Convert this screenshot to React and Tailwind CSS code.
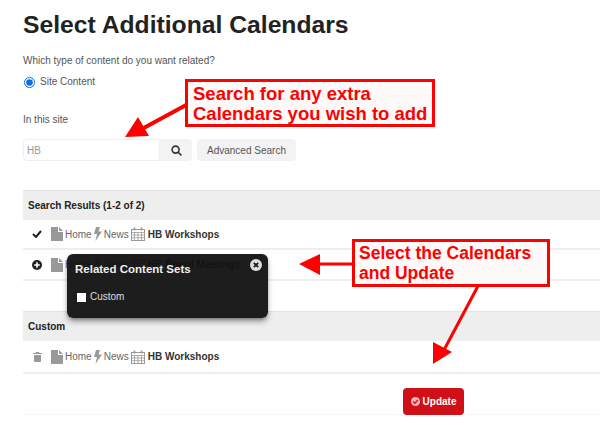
import React from 'react';

const font = { fontFamily: '"Liberation Sans", Arial, sans-serif' };

function FileIcon() {
  return (
    <svg width="12" height="14" viewBox="0 0 12 14" className="shrink-0">
      <path d="M0 0h7v5h5v9H0z" fill="#999" />
      <path d="M8 0l4 4H8z" fill="#999" />
    </svg>
  );
}

function BoltIcon() {
  return (
    <svg width="8" height="14" viewBox="0 0 8 14" className="shrink-0">
      <path d="M2 0h4L4.5 4.5H8L1.5 14l1.5-7H0z" fill="#999" />
    </svg>
  );
}

function CalendarIcon() {
  return (
    <svg width="14" height="14" viewBox="0 0 14 14" className="shrink-0" fill="none" stroke="#999" strokeWidth="1">
      <rect x="0.5" y="2.5" width="13" height="11" />
      <path d="M0.5 5.5h13M0.5 8h13M0.5 10.7h13M3.5 5.5v8M7 5.5v8M10.5 5.5v8" strokeWidth="0.8" />
      <path d="M3.5 0.5v3M10.5 0.5v3" strokeWidth="1.6" />
    </svg>
  );
}

function Crumbs({ name }) {
  return (
    <div className="flex items-center text-[10px] text-[#666]">
      <FileIcon />
      <span className="ml-[2px]">Home</span>
      <span className="ml-[2px]"><BoltIcon /></span>
      <span className="ml-[2px]">News</span>
      <span className="ml-[2px]"><CalendarIcon /></span>
      <span className="ml-[3px] font-bold text-[#333]">{name}</span>
    </div>
  );
}

function Row({ icon, name, h }) {
  return (
    <div className={`flex items-center border-b-2 border-[#eeeeee] ${h}`}>
      <div className="w-[28px] flex justify-center">{icon}</div>
      <Crumbs name={name} />
    </div>
  );
}

function SectionHead({ children, h }) {
  return (
    <div className={`flex items-center bg-[#eeeeee] border-t border-[#e2e2e2] pl-[5px] text-[10px] font-bold text-[#222] ${h}`}>
      {children}
    </div>
  );
}

function Callout({ className, children }) {
  return (
    <div className={`absolute border-[3px] border-[#ff0000] bg-[#fffafa] text-[#ff0000] font-bold ${className}`}>
      {children}
    </div>
  );
}

export default function App() {
  return (
    <div className="relative w-[600px] h-[425px] overflow-hidden bg-white pl-[23px]" style={font}>
      <h1 className="pt-[9px] text-[24.7px] leading-[32px] font-bold text-[#222]">Select Additional Calendars</h1>
      <p className="mt-[13px] text-[10px] leading-[14px] text-[#555]">Which type of content do you want related?</p>
      <label className="mt-[7px] flex items-center text-[10px] leading-[14px] text-[#555]">
        <input type="radio" defaultChecked className="ml-[1px] mt-[1px] h-[11px] w-[11px] accent-[#0b6fe8]" />
        <span className="ml-[5px]">Site Content</span>
      </label>

      <p className="mt-[24px] text-[10px] leading-[14px] text-[#555]">In this site</p>
      <div className="mt-[12px] flex">
        <div className="flex h-[22px] w-[137px] items-center rounded-l-sm border border-[#eeeeee] bg-white pl-[3px] text-[10px] text-[#999]">HB</div>
        <div className="flex h-[22px] w-[32px] items-center justify-center rounded-r-sm bg-[#f3f3f3]">
          <svg width="11" height="11" viewBox="0 0 11 11" fill="none" stroke="#333" strokeWidth="1.6">
            <circle cx="4.6" cy="4.6" r="3.5" />
            <path d="M7.2 7.2l3.2 3.2" />
          </svg>
        </div>
        <div className="ml-[5px] flex h-[22px] w-[99px] items-center justify-center rounded-sm bg-[#f3f3f3] text-[10px] text-[#555]">Advanced Search</div>
      </div>

      <div className="mt-[29px]">
        <SectionHead h="h-[30px]">Search Results (1-2 of 2)</SectionHead>
        <Row
          h="h-[30px]"
          name="HB Workshops"
          icon={
            <svg width="10" height="8" viewBox="0 0 10 8" fill="none" stroke="#222" strokeWidth="2">
              <path d="M1 4l3 3 5-6" />
            </svg>
          }
        />
        <Row
          h="h-[31px]"
          name="HB Board Meetings"
          icon={
            <svg width="10" height="10" viewBox="0 0 10 10">
              <circle cx="5" cy="5" r="5" fill="#222" />
              <path d="M5 2.2v5.6M2.2 5h5.6" stroke="#fff" strokeWidth="1.6" />
            </svg>
          }
        />
      </div>

      <div className="mt-[30px]">
        <SectionHead h="h-[30px]">Custom</SectionHead>
        <Row
          h="h-[33px]"
          name="HB Workshops"
          icon={
            <svg width="9" height="10" viewBox="0 0 9 10" fill="#999">
              <path d="M3 0h3l.5 1H9v1H0V1h2.5zM1 3h7v6a1 1 0 0 1-1 1H2a1 1 0 0 1-1-1z" />
            </svg>
          }
        />
      </div>

      <div className="mt-[14px] flex h-[27px] w-[577px] border-b border-[#f5f5f5] pl-[380px]">
        <div className="flex h-[27px] w-[61px] items-center justify-center gap-[3px] rounded-sm bg-[#d01016] text-[10px] font-bold text-white">
          <svg width="9" height="9" viewBox="0 0 9 9">
            <circle cx="4.5" cy="4.5" r="4.5" fill="#f3b6b8" />
            <path d="M2.2 4.5l1.7 1.7 3-3.2" fill="none" stroke="#d01016" strokeWidth="1.3" />
          </svg>
          Update
        </div>
      </div>

      {/* related content popover */}
      <div className="absolute left-[67px] top-[254px] h-[64px] w-[201px] rounded-md bg-[#111111]/95 shadow-md shadow-black/40">
        <div className="absolute left-[8px] top-[7px] text-[11.5px] font-bold text-[#eeeeee]">Related Content Sets</div>
        <svg className="absolute right-[6px] top-[5px]" width="12" height="12" viewBox="0 0 12 12">
          <circle cx="6" cy="6" r="6" fill="#dddddd" />
          <path d="M3.8 3.8l4.4 4.4M8.2 3.8L3.8 8.2" stroke="#1a1a1a" strokeWidth="1.8" />
        </svg>
        <div className="absolute left-[10px] top-[35px] flex items-center text-[10px] text-[#dddddd]">
          <span className="mt-[2px] h-[9px] w-[9px] bg-white" />
          <span className="ml-[4px]">Custom</span>
        </div>
      </div>

      {/* annotation arrows */}
      <svg className="absolute left-0 top-0" width="600" height="425" viewBox="0 0 600 425">
        <path d="M188 104L140 130" stroke="#ff0000" strokeWidth="4" />
        <path d="M125 137L138 117L149 136z" fill="#ff0000" />
        <path d="M355 264H318" stroke="#ff0000" strokeWidth="3" />
        <path d="M299 264L320 254V275z" fill="#ff0000" />
        <path d="M478 286L444 350" stroke="#ff0000" strokeWidth="3" />
        <path d="M433 364L433 342L452 352z" fill="#ff0000" />
      </svg>

      <Callout className="left-[185px] top-[79px] h-[48px] w-[250px] pl-[5px] pt-[2px] text-[18.5px] leading-[20px]">
        Search for any extra
        <br />
        Calendars you wish to add
      </Callout>
      <Callout className="left-[352px] top-[239px] h-[48px] w-[198px] pl-[4px] pt-[1px] text-[17.5px] leading-[20px]">
        Select the Calendars
        <br />
        and Update
      </Callout>
    </div>
  );
}
